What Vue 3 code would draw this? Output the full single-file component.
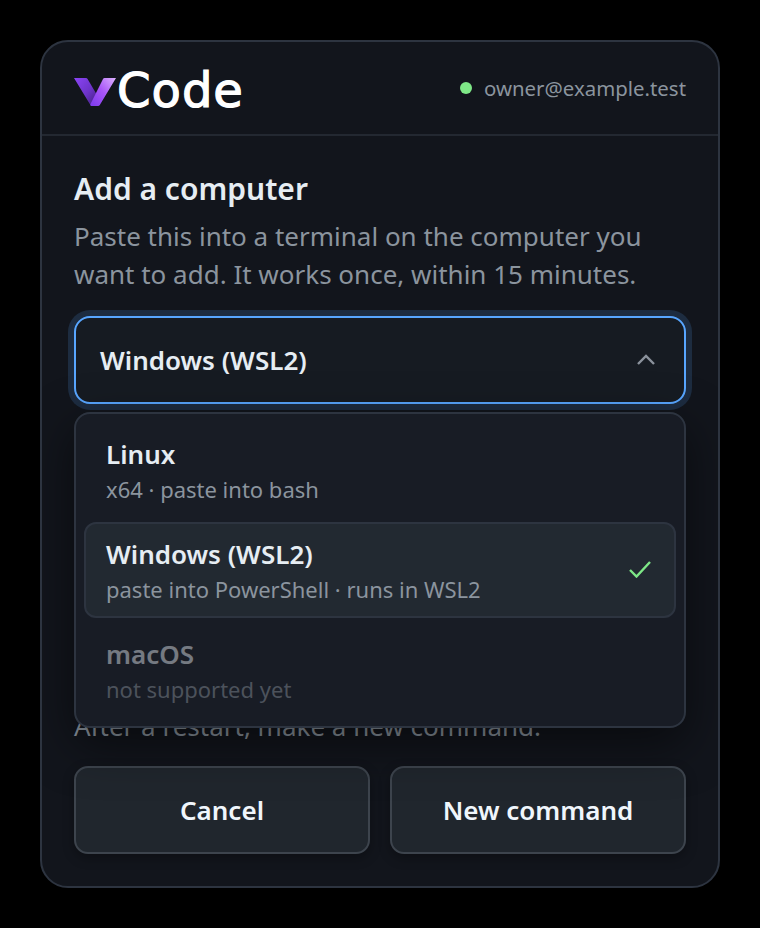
<script setup>
const options = [
  { name: 'Linux', hint: 'x64 · paste into bash' },
  { name: 'Windows (WSL2)', hint: 'paste into PowerShell · runs in WSL2', selected: true },
  { name: 'macOS', hint: 'not supported yet', disabled: true },
]
</script>

<template>
  <div class="page">
    <section class="card">
      <header class="head">
        <div class="logo">
          <svg class="mark" width="44" height="30" viewBox="0 0 44 30">
            <defs>
              <linearGradient id="armA" x1="0" y1="0" x2="1" y2="1">
                <stop offset="0" stop-color="#8b45f5" />
                <stop offset="0.55" stop-color="#6d33c9" />
                <stop offset="1" stop-color="#3f1f7a" />
              </linearGradient>
              <linearGradient id="armB" x1="1" y1="0" x2="0" y2="1">
                <stop offset="0" stop-color="#dcb2ff" />
                <stop offset="0.5" stop-color="#a855f7" />
                <stop offset="1" stop-color="#7c3aed" />
              </linearGradient>
            </defs>
            <path d="M0 2h12q1 0 1.600 1L23 19l-5 11q-1 0-1.600-1L0 2z" fill="url(#armA)" />
            <path d="M42 2H30.500q-1 0-1.500 1L16.500 28q-.7 2 1.500 2h6q1.200 0 1.800-1L42 2z" fill="url(#armB)" />
          </svg>
          <span class="word">Code</span>
        </div>
        <div class="user"><i class="dot"></i>owner@example.test</div>
      </header>
      <div class="body">
        <h1>Add a computer</h1>
        <p class="lead">Paste this into a terminal on the computer you want to add. It works once, within 15 minutes.</p>
        <div class="picker">
          <div class="select">
            <span>Windows (WSL2)</span>
            <svg width="20" height="12" viewBox="0 0 20 12"><path d="M2 10l8-8 8 8" fill="none" stroke="#8b929c" stroke-width="2.400" /></svg>
          </div>
          <ul class="menu">
            <li v-for="o in options" :key="o.name" class="opt" :class="{ selected: o.selected, disabled: o.disabled }">
              <div class="txt">
                <strong>{{ o.name }}</strong>
                <small>{{ o.hint }}</small>
              </div>
              <svg v-if="o.selected" width="24" height="18" viewBox="0 0 24 18"><path d="M2 10l6.500 6.500L22 2" fill="none" stroke="#7ee787" stroke-width="2.400" /></svg>
            </li>
          </ul>
        </div>
        <p class="note">After a restart, make a new command.</p>
        <div class="actions">
          <button>Cancel</button>
          <button>New command</button>
        </div>
      </div>
    </section>
  </div>
</template>

<style>
html, body { margin: 0; background: #000; }
</style>

<style scoped>
.page { width: 760px; height: 928px; padding: 40px; box-sizing: border-box; font-family: "Noto Sans", sans-serif; background: #000; }
.card { height: 848px; box-sizing: border-box; border: 2px solid #2d3440; border-radius: 28px; background: #12151c; overflow: hidden; }
.head { height: 94px; box-sizing: border-box; padding: 0 32px; display: flex; align-items: center; justify-content: space-between; border-bottom: 2px solid #232831; }
.logo { display: flex; align-items: center; }
.mark { margin-top: 6px; }
.word { font-family: "DejaVu Sans", sans-serif; font-size: 48px; line-height: 1; font-weight: 400; letter-spacing: 1px; color: #fff; margin-left: -1px; padding-top: 3px; -webkit-text-stroke: 1.200px #fff; }
.user { display: flex; align-items: center; gap: 12px; font-size: 20.400px; color: #8b949e; }
.dot { width: 12px; height: 12px; border-radius: 50%; background: #7ee787; }
.body { padding: 31px 32px 0; }
h1 { margin: 0; font-size: 30px; line-height: 44px; font-weight: 600; color: #e6edf3; }
.lead { margin: 6px 0 0; font-size: 26px; line-height: 38px; color: #8b949e; }
.picker { position: relative; margin-top: 23px; }
.select { height: 88px; box-sizing: border-box; border: 2px solid #58a6ff; border-radius: 16px; box-shadow: 0 0 0 6px rgba(88,166,255,.16); background: #161b22; display: flex; align-items: center; justify-content: space-between; padding: 0 28px 0 24px; font-size: 26px; font-weight: 600; color: #e6edf3; }
.menu { position: absolute; left: 0; right: 0; top: 96px; margin: 0; padding: 8px; list-style: none; border: 2px solid #2d3440; border-radius: 16px; background: #181c25; display: flex; flex-direction: column; gap: 4px; box-shadow: 0 16px 48px rgba(0,0,0,.5); z-index: 2; }
.opt { height: 96px; box-sizing: border-box; padding: 2px 20px 0; display: flex; align-items: center; justify-content: space-between; border: 2px solid transparent; border-radius: 12px; }
.opt svg { margin-right: 2px; margin-top: -4px; }
.opt.selected { background: #222931; border-color: #2d3440; }
.txt { display: flex; flex-direction: column; }
strong { font-size: 26px; line-height: 36px; font-weight: 600; color: #e6edf3; }
small { font-size: 22px; line-height: 34px; color: #8b949e; }
.disabled strong, .disabled small { opacity: .45; }
.note { margin: 303px 0 0; font-size: 26px; line-height: 38px; color: #8b949e; }
.actions { margin-top: 21px; display: grid; grid-template-columns: 1fr 1fr; gap: 20px; }
button { height: 88px; border: 2px solid #3d444d; border-radius: 14px; background: #20262d; font: 600 26px "Noto Sans", sans-serif; color: #f0f6fc; box-shadow: 0 4px 12px rgba(0,0,0,.3); }
</style>
